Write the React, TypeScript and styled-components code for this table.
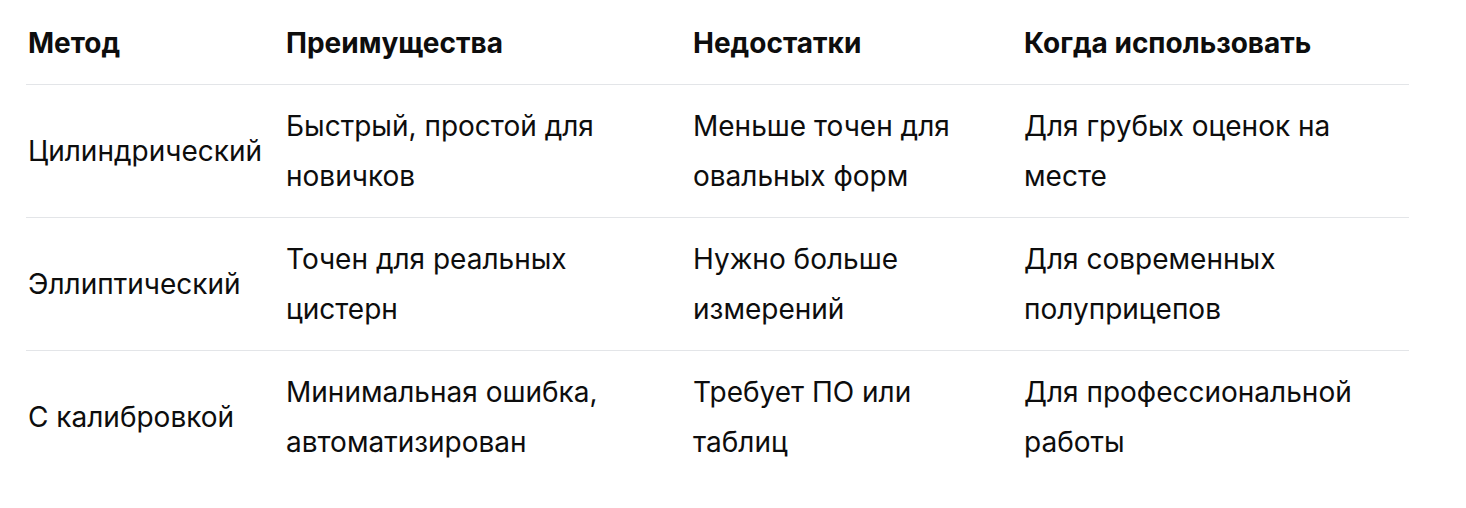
import React from "react";
import styled, { createGlobalStyle } from "styled-components";

const GlobalStyle = createGlobalStyle`
  html, body {
    margin: 0;
    padding: 0;
    background: #ffffff;
  }
  body {
    font-family: Inter, "Noto Sans", "Liberation Sans", sans-serif;
    color: #0d0d0d;
  }
`;

const Page = styled.div`
  padding: 0 57px 26px 26px;
`;

const Table = styled.div`
  display: grid;
  grid-template-columns: 258px 407px 331px 387px;
  width: 1383px;
`;

const Row = styled.div<{ $last?: boolean }>`
  display: contents;

  & > div {
    border-bottom: ${(p) => (p.$last ? "none" : "1px solid #e3e5e8")};
  }
`;

const HeadCell = styled.div`
  padding: 18px 28px 16px 2px;
  font-size: 28px;
  line-height: 50px;
  font-weight: 700;
  white-space: nowrap;
`;

const Cell = styled.div`
  display: flex;
  align-items: center;
  padding: 16px 28px 16px 2px;
  font-size: 28px;
  line-height: 50px;
  font-weight: 400;
`;

const headers = ["Метод", "Преимущества", "Недостатки", "Когда использовать"];

const rows = [
  [
    "Цилиндрический",
    "Быстрый, простой для новичков",
    "Меньше точен для овальных форм",
    "Для грубых оценок на месте",
  ],
  [
    "Эллиптический",
    "Точен для реальных цистерн",
    "Нужно больше измерений",
    "Для современных полуприцепов",
  ],
  [
    "С калибровкой",
    "Минимальная ошибка, автоматизирован",
    "Требует ПО или таблиц",
    "Для профессиональной работы",
  ],
];

export default function App() {
  return (
    <>
      <GlobalStyle />
      <Page>
        <Table>
          <Row>
            {headers.map((h) => (
              <HeadCell key={h}>{h}</HeadCell>
            ))}
          </Row>
          {rows.map((r, i) => (
            <Row key={i} $last={i === rows.length - 1}>
              {r.map((c) => (
                <Cell key={c}>{c}</Cell>
              ))}
            </Row>
          ))}
        </Table>
      </Page>
    </>
  );
}
